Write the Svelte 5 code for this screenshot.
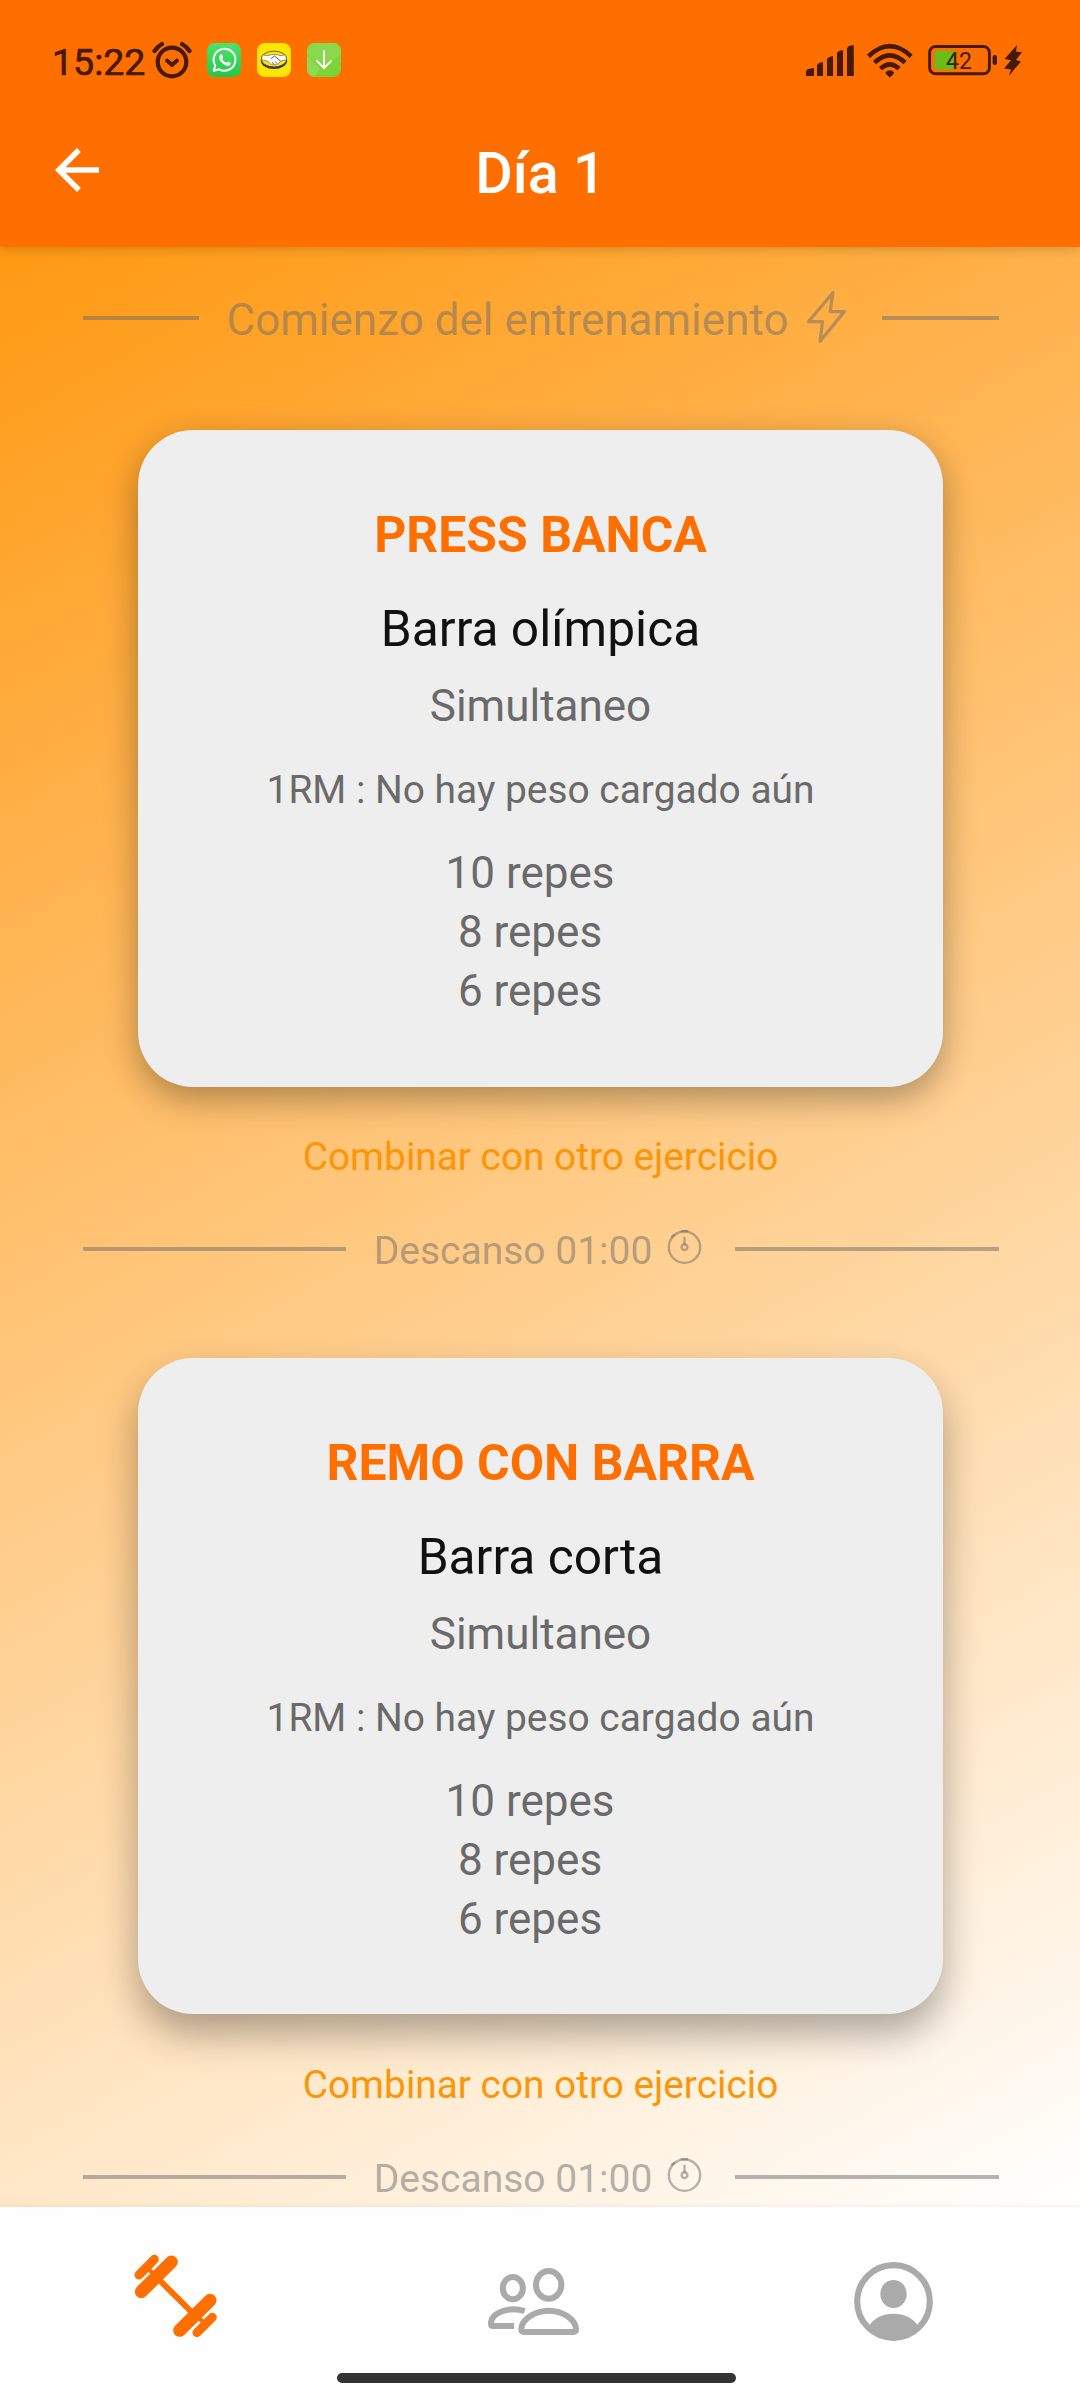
<script>
  const exercises = [
    {
      name: 'PRESS BANCA',
      equipment: 'Barra olímpica',
      mode: 'Simultaneo',
      max: '1RM : No hay peso cargado aún',
      sets: ['10 repes', '8 repes', '6 repes'],
      rest: '01:00',
      raised: false
    },
    {
      name: 'REMO CON BARRA',
      equipment: 'Barra corta',
      mode: 'Simultaneo',
      max: '1RM : No hay peso cargado aún',
      sets: ['10 repes', '8 repes', '6 repes'],
      rest: '01:00',
      raised: true
    }
  ];
</script>

<div class="screen">
  <header>
    <div class="status">
      <span class="time">15:22</span>
      <svg class="alarm" viewBox="0 0 40 38" fill="none" stroke="#451a00" stroke-linecap="round" stroke-linejoin="round">
        <circle cx="20" cy="21" r="14.3" stroke-width="4.2" />
        <path d="M2.5 10Q5.5 5.5 10 3M30 3q4.500 2.500 7.500 7" stroke-width="4.200" />
        <path d="M15 19.500l5 4.500 5-4.500" stroke-width="3.800" />
      </svg>
      <svg class="app" viewBox="0 0 34 34">
        <defs>
          <linearGradient id="wa" x1="0" y1="0" x2="0" y2="1">
            <stop offset="0" stop-color="#4be468" />
            <stop offset="1" stop-color="#24c74a" />
          </linearGradient>
        </defs>
        <rect width="34" height="34" rx="8" fill="url(#wa)" />
        <path d="M6.700 27.700l1.500-5.300a10.900 10.900 0 1 1 4.100 3.900z" fill="none" stroke="#fff" stroke-width="2" stroke-linejoin="round" />
        <path d="M13.600 11.500c.6-.5 1.300-.3 1.600.3l.9 2.100c.2.700-1 1.500-.8 2.100.9 1.700 2.200 2.900 3.900 3.700.7.200 1.400-1.400 2.100-1.100l2.200 1.100c.6.4.2 1.700-.4 2.300-1.600 1.400-3.900.9-6.100-.4-2.200-1.400-4.200-3.700-4.700-6-.3-1.700.2-3.200 1.300-4.100z" fill="#fff" />
      </svg>
      <svg class="app" viewBox="0 0 34 34">
        <rect width="34" height="34" rx="8" fill="#ffe600" />
        <ellipse cx="17" cy="17.500" rx="13.200" ry="8.600" fill="#2d3277" />
        <ellipse cx="17" cy="16" rx="12.700" ry="7.900" fill="#ffe600" stroke="#55551f" stroke-width=".9" />
        <path d="M5.500 11.800q5 1.700 8.500 0 3-1 6 0 4 1.700 8.500 0l1 5-6 1.200q-1 3.500-5.500 3.700-5 .5-7-3.500l-6.500-1.400z" fill="#fff" stroke="#6b6d70" stroke-width=".7" />
        <path d="M14 15.500l3.500-2.500 6 5M15 19.500l2 1.800M18 18.500l2 2" fill="none" stroke="#55586b" stroke-width="1" />
      </svg>
      <svg class="app" viewBox="0 0 34 34">
        <rect width="34" height="34" rx="8" fill="#7ed338" />
        <path d="M8 0h18a8 8 0 0 1 8 8v3L17 26 0 11V8a8 8 0 0 1 8-8z" fill="#8ad84c" />
        <path d="M0 12l13 14-6 8a8 8 0 0 1-7-8z" fill="#8ddb55" />
        <path d="M17 7.500V25M9.500 17.700l7.500 7.500 7.500-7.500" fill="none" stroke="#fff" stroke-width="1.900" />
      </svg>
      <svg class="system" viewBox="0 0 220 40" fill="#451a00">
        <path d="M6 36v-4q0-2 2-3l6-1v8zM17 36V25l2-2 4-1v14zM27 36V19l2-2 4-1v20zM37 36V13l2-2 4-1v26zM47 36V8l2-2 4.800-1v31z" />
        <g fill="none" stroke="#451a00" stroke-width="4.600">
          <path d="M68.500 16.300q21.300-20.300 42.600 0" />
          <path d="M74.500 22.700q15.300-14.600 30.600 0" />
          <path d="M80.500 28.700q9.300-8.800 18.600 0" />
        </g>
        <path d="M85.300 32.500q4.500-4.500 9 0-1.500 3-4.500 5-3-2-4.500-5z" />
        <rect x="129.600" y="6.500" width="59.800" height="27.200" rx="6" fill="none" stroke="#451a00" stroke-width="2.900" />
        <rect x="134.600" y="10.800" width="21.600" height="18.600" rx="3" fill="#66bf17" />
        <rect x="192.600" y="15" width="4.400" height="10" rx="2" />
        <text x="146" y="29" font-size="23">42</text>
        <path d="M217 5l-12.500 14 6.500 1.200-7 8.300 7 1-2.200 6.500L221 21.500l-5-1.500 6-7.700-6-.8z" />
      </svg>
    </div>
    <div class="bar">
      <svg class="back" viewBox="0 0 24 24" fill="#fff">
        <path d="M20 11H7.830l5.590-5.590L12 4l-8 8 8 8 1.410-1.410L7.830 13H20v-2z" />
      </svg>
      <h1>Día 1</h1>
    </div>
  </header>

  <main>
    <div class="divider start">
      <i></i>
      <span>Comienzo del entrenamiento</span>
      <svg class="bolt" viewBox="46 33 128 160" fill="none" stroke="currentColor" stroke-width="9.500" stroke-linejoin="round">
        <path d="M129 41L121 97H163L91 185L98 127H56Z" />
      </svg>
      <i></i>
    </div>

    {#each exercises as e}
      <article class:raised={e.raised}>
        <h2>{e.name}</h2>
        <p class="equipment">{e.equipment}</p>
        <p class="mode">{e.mode}</p>
        <p class="max">{e.max}</p>
        <ul>
          {#each e.sets as s}
            <li>{s}</li>
          {/each}
        </ul>
      </article>
      <button>Combinar con otro ejercicio</button>
      <div class="divider rest">
        <i></i>
        <span>Descanso {e.rest}</span>
        <svg class="timer" viewBox="83 42 104 104" fill="none" stroke="currentColor" stroke-width="7">
          <path d="M127 48.500h16M104 60l-6 4" stroke-linecap="round" />
          <circle cx="135" cy="96" r="46.500" />
          <circle cx="135" cy="96" r="8.500" stroke-width="7.500" />
          <path d="M135 65v23" />
        </svg>
        <i></i>
      </div>
    {/each}
  </main>

  <nav>
    <div class="tabs">
      <svg viewBox="0 0 480 450" fill="none" stroke="#ff6f00" stroke-linecap="round">
        <path d="M124 215L214 126M239 331L330 241" stroke-width="39" />
        <path d="M117 165L163 118M291 338L337 292" stroke-width="27" />
        <path d="M170 172L285 286" stroke-width="18" />
        <path d="M146 148L165 165M292 288L311 308" stroke-width="13" />
      </svg>
      <svg viewBox="0 0 480 450" fill="none" stroke="#aaa" stroke-width="18">
        <ellipse cx="158.500" cy="204.500" rx="30" ry="33.500" />
        <ellipse cx="266" cy="194.500" rx="38" ry="41.500" />
        <path d="M266 272C225 272 184 298 184 328Q184 336 192 336H340Q348 336 348 328C348 298 307 272 266 272Z" />
        <path d="M194 273C150 259 93 276 93 311Q93 318 99 318H162" />
      </svg>
      <svg viewBox="0 0 480 450" fill="#aaa">
        <circle cx="220.500" cy="244.500" r="109" fill="none" stroke="#aaa" stroke-width="18.500" />
        <ellipse cx="220.500" cy="222" rx="39.500" ry="42" />
        <path d="M146 318Q172 281 220.500 281T295 318Q268 356 220.500 356T146 318Z" />
      </svg>
    </div>
    <div class="home"></div>
  </nav>
</div>

<style>
  :global(body) {
    margin: 0;
  }

  .screen {
    width: 1080px;
    height: 2400px;
    display: flex;
    flex-direction: column;
    overflow: hidden;
    font-family: Roboto, sans-serif;
  }

  h1, h2, p, ul {
    margin: 0;
    padding: 0;
  }

  svg {
    display: block;
    flex: none;
  }

  header {
    height: 247px;
    flex: none;
    background: #ff6f00;
    box-shadow: 0 2px 10px rgba(0, 0, 0, 0.18);
    position: relative;
    z-index: 1;
  }

  .status {
    height: 66px;
    padding: 27px 0 0 52px;
    display: flex;
    align-items: center;
  }

  .time {
    width: 100px;
    font-size: 37.500px;
    font-weight: 400;
    line-height: 44px;
    padding-top: 3px;
    color: #451a00;
    -webkit-text-stroke: 0.7px #451a00;
  }

  .alarm {
    width: 40px;
    height: 38px;
    margin-right: 15px;
  }

  .app {
    width: 34px;
    height: 34px;
    margin-right: 16px;
  }

  .system {
    width: 220px;
    height: 40px;
    margin-left: 443px;
    overflow: visible;
  }

  .bar {
    height: 154px;
    display: grid;
    grid-template-columns: 110px 1fr 110px;
    align-items: center;
  }

  .back {
    width: 66px;
    height: 66px;
    margin-left: 44px;
  }

  h1 {
    font-size: 57.500px;
    font-weight: 500;
    line-height: 68px;
    padding: 7px 0 0 1px;
    text-align: center;
    color: #fff;
  }

  main {
    height: 1960px;
    flex: none;
    box-sizing: border-box;
    padding-top: 42px;
    overflow: hidden;
    display: flex;
    flex-direction: column;
    align-items: center;
    background: linear-gradient(151.150deg, #ff9912, #fff);
  }

  .divider {
    width: 916px;
    flex: none;
    display: flex;
    align-items: center;
    color: rgba(107, 107, 107, 0.5);
    white-space: nowrap;
    padding-left: 1px;
  }

  .divider i {
    flex: 1;
    height: 4px;
    background: currentColor;
  }

  .start {
    height: 58px;
    margin-bottom: 83px;
    font-size: 44px;
  }

  .start span {
    margin-left: 28px;
    padding-top: 4px;
  }

  .bolt {
    width: 43px;
    height: 54px;
    margin: 0 34px 2px 17px;
  }

  .rest {
    height: 46px;
    margin: 46.500px 0 86px;
    font-size: 39px;
  }

  .rest span {
    margin-left: 28px;
    padding-top: 3px;
  }

  .timer {
    width: 35px;
    height: 35px;
    margin: 0 33px 5px 15px;
  }

  article {
    width: 805px;
    height: 657px;
    flex: none;
    box-sizing: border-box;
    padding: 75px 0 0 1px;
    border-radius: 55px;
    background: #eee;
    text-align: center;
    box-shadow: 0 12px 34px rgba(0, 0, 0, 0.32);
  }

  article.raised {
    height: 656px;
    margin-bottom: 1px;
    box-shadow: 0 20px 38px rgba(0, 0, 0, 0.32);
  }

  h2 {
    font-size: 49.900px;
    font-weight: 700;
    line-height: 60px;
    color: #ff6f00;
  }

  .equipment {
    margin-top: 35px;
    font-size: 49.700px;
    line-height: 58px;
    color: #111;
  }

  .mode {
    margin-top: 21.500px;
    font-size: 44px;
    line-height: 52px;
    color: #6a6a6a;
  }

  .max {
    margin-top: 35.500px;
    font-size: 38.900px;
    line-height: 46px;
    color: #6a6a6a;
  }

  ul {
    margin-top: 31px;
    padding-right: 21px;
    list-style: none;
    font-size: 44px;
    line-height: 59px;
    color: #6a6a6a;
  }

  button {
    margin: 46.500px 0 0;
    padding: 0 0 0 1px;
    border: 0;
    background: none;
    font: 38.800px/46px Roboto, sans-serif;
    color: #fb9509;
  }

  nav {
    flex: 1;
    position: relative;
    background: #fefefe;
    box-shadow: 0 0 6px rgba(0, 0, 0, 0.08);
    display: flex;
    flex-direction: column;
    align-items: center;
  }

  .tabs {
    align-self: stretch;
    padding-top: 13px;
    display: grid;
    grid-template-columns: repeat(3, 1fr);
    justify-items: center;
  }

  .tabs svg {
    width: 160px;
    height: 150px;
  }

  .home {
    width: 399px;
    height: 10px;
    margin: 3px 8px 0 0;
    border-radius: 5px;
    background: #333;
  }
</style>
